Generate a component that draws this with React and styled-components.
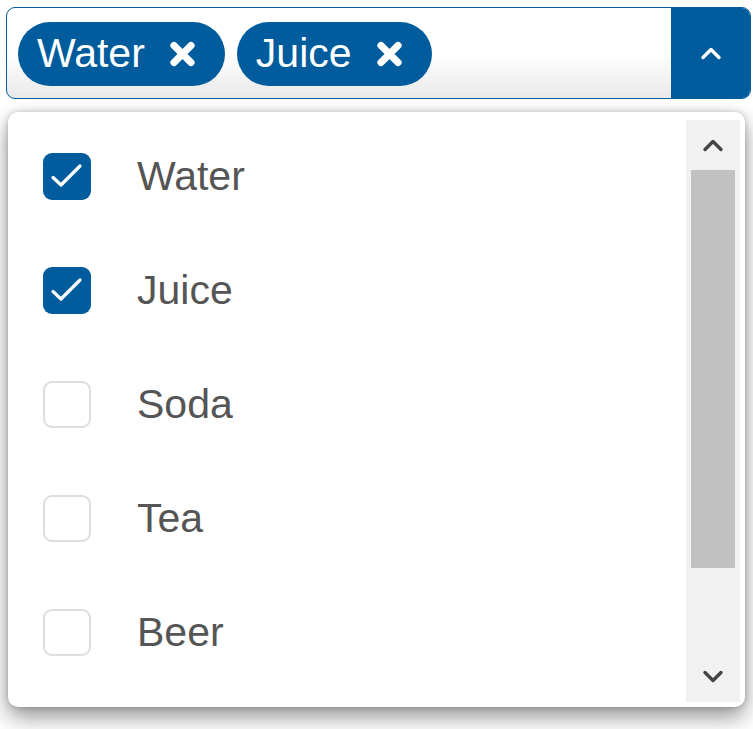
import React from 'react';
import styled, { createGlobalStyle } from 'styled-components';

const BLUE = '#005c9c';

const GlobalStyle = createGlobalStyle`
  html, body {
    margin: 0;
    padding: 0;
    background: #ffffff;
  }
  body {
    font-family: 'Liberation Sans', Arial, sans-serif;
  }
`;

const Page = styled.div`
  width: 753px;
  height: 729px;
  padding: 7px 2px 0 6px;
  box-sizing: border-box;
  display: flex;
  flex-direction: column;
  gap: 13px;
  overflow: hidden;
`;

const Field = styled.div`
  height: 92px;
  box-sizing: border-box;
  border: 1.5px solid ${BLUE};
  border-radius: 9px;
  display: flex;
  overflow: hidden;
  background: linear-gradient(to bottom, #ffffff 50%, #e9e9e9 100%);
`;

const Chips = styled.div`
  flex: 1;
  display: flex;
  align-items: center;
  gap: 12px;
  padding: 1px 0 0 11px;
`;

const Chip = styled.div`
  height: 64px;
  border-radius: 32px;
  background: ${BLUE};
  color: #fff;
  display: flex;
  align-items: center;
  padding: 0 28px 0 19px;
  gap: 23px;
  font-size: 41px;
  line-height: 1;
`;

const ToggleButton = styled.div`
  width: 79px;
  background: ${BLUE};
  display: flex;
  align-items: center;
  justify-content: center;
`;

const Panel = styled.div`
  width: 737px;
  height: 595px;
  margin-left: 2px;
  box-sizing: border-box;
  background: #fff;
  border-radius: 10px;
  box-shadow: 0 10px 22px rgba(0, 0, 0, 0.42), 0 0 6px rgba(0, 0, 0, 0.2);
  display: flex;
  overflow: hidden;
`;

const List = styled.div`
  flex: 1;
  padding-top: 7px;
  overflow: hidden;
`;

const Row = styled.div`
  height: 114px;
  display: flex;
  align-items: center;
  padding-left: 35px;
  gap: 46px;
`;

const Box = styled.div`
  width: 48px;
  height: 47px;
  box-sizing: border-box;
  border-radius: 9px;
  background: ${p => (p.checked ? BLUE : '#fff')};
  border: ${p => (p.checked ? 'none' : '2px solid #dedede')};
  display: flex;
  align-items: center;
  justify-content: center;
`;

const Label = styled.span`
  font-size: 41px;
  color: #555555;
`;

const Scrollbar = styled.div`
  width: 54px;
  margin: 8px 5px 5px 0;
  background: #f1f1f1;
  display: flex;
  flex-direction: column;
  align-items: center;
`;

const ArrowCell = styled.div`
  height: 50px;
  display: flex;
  align-items: center;
  justify-content: center;
  flex-shrink: 0;
`;

const Track = styled.div`
  flex: 1;
  width: 100%;
  padding: 0 5px;
  box-sizing: border-box;
`;

const Thumb = styled.div`
  height: 398px;
  background: #c1c1c1;
`;

const Cross = () => (
  <svg width="29" height="28" viewBox="0 0 29 28">
    <path d="M6 5.5 L23 22.5 M23 5.5 L6 22.5" stroke="#fff" strokeWidth="7.2" strokeLinecap="round" />
  </svg>
);

const Chevron = ({ up, color, width = 3 }) => (
  <svg width="22" height="14" viewBox="0 0 22 14">
    <path
      d={up ? 'M3 11.5 L11 3.5 L19 11.5' : 'M3 2.5 L11 10.5 L19 2.5'}
      fill="none"
      stroke={color}
      strokeWidth={width}
      strokeLinecap="round"
      strokeLinejoin="round"
    />
  </svg>
);

const Check = () => (
  <svg width="34" height="28" viewBox="0 0 34 28">
    <path d="M3 15.5 L11 23 L30 4" fill="none" stroke="#fff" strokeWidth="3.2" strokeLinecap="round" strokeLinejoin="round" />
  </svg>
);

const options = [
  { label: 'Water', checked: true },
  { label: 'Juice', checked: true },
  { label: 'Soda', checked: false },
  { label: 'Tea', checked: false },
  { label: 'Beer', checked: false },
];

export default function App() {
  const selected = options.filter(o => o.checked);
  return (
    <>
      <GlobalStyle />
      <Page>
        <Field>
          <Chips>
            {selected.map(o => (
              <Chip key={o.label}>
                {o.label}
                <Cross />
              </Chip>
            ))}
          </Chips>
          <ToggleButton>
            <Chevron up color="#fff" width={3.4} />
          </ToggleButton>
        </Field>
        <Panel>
          <List>
            {options.map(o => (
              <Row key={o.label}>
                <Box checked={o.checked}>{o.checked && <Check />}</Box>
                <Label>{o.label}</Label>
              </Row>
            ))}
          </List>
          <Scrollbar>
            <ArrowCell>
              <Chevron up color="#444" width={3.4} />
            </ArrowCell>
            <Track>
              <Thumb />
            </Track>
            <ArrowCell>
              <Chevron color="#444" width={3.4} />
            </ArrowCell>
          </Scrollbar>
        </Panel>
      </Page>
    </>
  );
}
